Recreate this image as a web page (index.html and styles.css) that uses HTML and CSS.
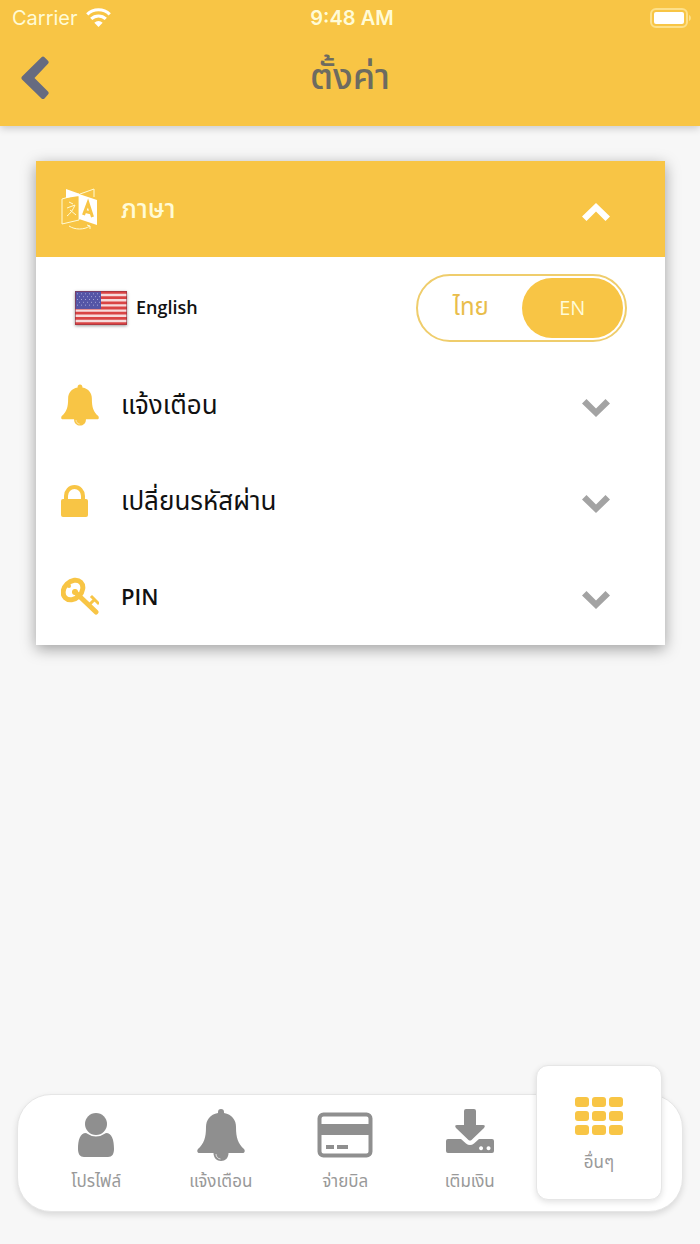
FILE: index.html
```html
<!DOCTYPE html>
<html lang="th">
<head>
<meta charset="utf-8">
<meta name="viewport" content="width=device-width, initial-scale=1">
<title>ตั้งค่า</title>
<link rel="stylesheet" href="styles.css">
</head>
<body>
<svg class="sprite" aria-hidden="true">
  <symbol id="bell" viewBox="0 0 48 52">
    <path d="M24 0c2 0 3 1.300 3 3v1c8 1.500 12 7 12 14 0 11 2 16.500 8 22 1.500 2 .6 4-1.500 4H2.500C.4 44-.5 42 1 40c6-5.500 8-11 8-22C9 11 13 5.500 21 4V3c0-1.700 1-3 3-3z"/>
    <path d="M16.500 43h15v1c0 5-3.300 8-7.500 8s-7.500-3-7.500-8z"/>
    <path class="shine" d="M19 45c0 2.800 2 4.800 4.500 5"/>
  </symbol>
  <symbol id="chevron" viewBox="0 0 28 18">
    <path d="M4.500 0 14 9.500 23.500 0 28 4.500 14 18 0 4.500z"/>
  </symbol>
</svg>
<div class="screen">
  <header class="top">
    <div class="status">
      <div class="carrier">
        <span>Carrier</span>
        <svg class="wifi" viewBox="0 0 24 18" aria-hidden="true">
          <path class="wave" d="M1.200 6a15.300 15.300 0 0 1 21.600 0M5 10.400a9.900 9.900 0 0 1 14 0"/>
          <path class="dot" d="M8 14a5.600 5.600 0 0 1 8 0L12 18z"/>
        </svg>
      </div>
      <time class="clock">9:48 AM</time>
      <svg class="battery" viewBox="0 0 42 20" aria-hidden="true">
        <rect class="shell" x="1" y="1" width="36" height="18" rx="5"/>
        <rect class="charge" x="4" y="4" width="30" height="12" rx="2"/>
        <path class="tip" d="M39 7c2.500 1 2.500 5 0 6z"/>
      </svg>
    </div>
    <div class="titlebar">
      <button class="back" type="button" aria-label="Back">
        <svg viewBox="0 0 28 44" aria-hidden="true"><path d="M20.500 1.200q1.500-1.200 3 0l3.500 3.500q1.400 1.500 0 3L13.500 22 27 35.500q1.400 1.500 0 3L23.500 42.500q-1.500 1.200-3 0L1 23.500q-1.200-1.500 0-3z"/></svg>
      </button>
      <h1 class="title">ตั้งค่า</h1>
    </div>
  </header>

  <main class="content">
    <section class="card">
      <button class="row row-open" type="button" aria-expanded="true">
        <svg class="icon translate" viewBox="0 0 38 42" aria-hidden="true">
          <path class="line" d="M19 6 33 1v8M1 11 18 6v26L1 36z"/>
          <path class="solid" d="M5 1 19 6 18 8 5 10zM18 6l18 6v25l-18-6z"/>
          <path class="line" d="M8 14l4 2M6 20l8-3c-2 5-5 9-8 11M9 22l6 5"/>
          <path class="letter" d="M22.500 27 27 15 31.500 29M24.500 23.500l6 1.500"/>
          <path class="line" d="M8 38c6 4 15 4 21 0m-3-1 3 1 0 3"/>
        </svg>
        <span class="label">ภาษา</span>
        <svg class="chevron up" aria-hidden="true"><use href="#chevron"/></svg>
      </button>
      <div class="language">
        <svg class="flag" viewBox="0 0 52 36" preserveAspectRatio="none" aria-hidden="true">
          <rect width="52" height="36" fill="#f6dcdc"/>
          <path d="M0 1.500h52M0 7h52M0 12.500h52M0 18h52M0 23.500h52M0 29h52M0 34.500h52" stroke="#d94444" stroke-width="3"/>
          <rect width="26" height="19" fill="#5455a6"/>
          <path d="M2 3h23M4 6h21M2 9h23M4 12h21M2 15h23" stroke="#a6a7d6" stroke-width="1" stroke-dasharray="1 3"/>
          <rect x=".5" y=".5" width="51" height="35" fill="none" stroke="#8f3040" stroke-opacity=".6"/>
        </svg>
        <span class="language-name">English</span>
        <fieldset class="switch" aria-label="ภาษา">
          <label class="option"><input type="radio" name="lang" value="th"><span>ไทย</span></label>
          <label class="option option-latin"><input type="radio" name="lang" value="en" checked><span>EN</span></label>
        </fieldset>
      </div>
      <button class="row" type="button" aria-expanded="false">
        <svg class="icon" viewBox="0 0 38 42" aria-hidden="true"><use href="#bell" width="38" height="42"/></svg>
        <span class="label">แจ้งเตือน</span>
        <svg class="chevron" aria-hidden="true"><use href="#chevron"/></svg>
      </button>
      <button class="row" type="button" aria-expanded="false">
        <svg class="icon" viewBox="0 0 38 42" aria-hidden="true">
          <rect x="0" y="19" width="27" height="18" rx="2"/>
          <path class="shackle" d="M5 21v-5a8.500 9 0 0 1 17 0v5"/>
        </svg>
        <span class="label">เปลี่ยนรหัสผ่าน</span>
        <svg class="chevron" aria-hidden="true"><use href="#chevron"/></svg>
      </button>
      <button class="row" type="button" aria-expanded="false">
        <svg class="icon" viewBox="0 0 38 42" aria-hidden="true">
          <g class="key">
            <ellipse cx="12" cy="14" rx="11" ry="8.500" transform="rotate(-45 12 14)"/>
            <path d="M14 16 35 36"/>
            <path class="teeth" d="M28 29l5-5M31 21l6 6"/>
          </g>
          <circle cx="14" cy="16" r="3"/>
          <circle cx="8" cy="10" r="2"/>
        </svg>
        <span class="label label-latin">PIN</span>
        <svg class="chevron" aria-hidden="true"><use href="#chevron"/></svg>
      </button>
    </section>
  </main>

  <nav class="tabs">
    <a class="tab" href="#profile">
      <svg viewBox="0 0 56 52" aria-hidden="true"><circle cx="28" cy="15" r="11"/><path d="M18 24q10 7 20 0c6 0 8 7 8 16 0 5-2 8-6 8H16c-4 0-6-3-6-8 0-9 2-16 8-16z"/></svg>
      <span>โปรไฟล์</span>
    </a>
    <a class="tab" href="#notifications">
      <svg viewBox="0 0 56 52" aria-hidden="true"><use href="#bell" x="4" width="48" height="52"/></svg>
      <span>แจ้งเตือน</span>
    </a>
    <a class="tab" href="#bills">
      <svg viewBox="0 0 56 52" aria-hidden="true"><rect class="outline" x="2.500" y="5.500" width="51" height="41" rx="4"/><path d="M2 15h52v11H2zM9 36h8v4H9zM20 36h11v4H20z"/></svg>
      <span>จ่ายบิล</span>
    </a>
    <a class="tab" href="#topup">
      <svg viewBox="0 0 56 52" aria-hidden="true"><path d="M24 0h8q2 0 2 2v14h7q3 0 1 3L29.500 31q-1.500 1-3 0L14 19q-2-3 1-3h7V2q0-2 2-2z"/><path fill-rule="evenodd" d="M6 30h13l5 4.500q4 3 8 0l5-4.500h13q2 0 2 2v10q0 2-2 2H6q-2 0-2-2V32q0-2 2-2zM39 37.200a2 2 0 1 0 .1 0zM46.500 37.200a2 2 0 1 0 .1 0z"/></svg>
      <span>เติมเงิน</span>
    </a>
    <a class="tab tab-active" href="#more" aria-current="page">
      <svg viewBox="0 0 56 52" aria-hidden="true">
        <rect x="4" y="3" width="14" height="10" rx="3"/><rect x="21" y="3" width="14" height="10" rx="3"/><rect x="38" y="3" width="14" height="10" rx="3"/>
        <rect x="4" y="17" width="14" height="10" rx="3"/><rect x="21" y="17" width="14" height="10" rx="3"/><rect x="38" y="17" width="14" height="10" rx="3"/>
        <rect x="4" y="31" width="14" height="10" rx="3"/><rect x="21" y="31" width="14" height="10" rx="3"/><rect x="38" y="31" width="14" height="10" rx="3"/>
      </svg>
      <span>อื่นๆ</span>
    </a>
  </nav>
</div>
</body>
</html>
```
FILE: styles.css
```css
:root {
  --gold: #f8c545;
  --cream: #fffbd6;
  --gray: #8f8f8f;
}

* { box-sizing: border-box; }

body {
  margin: 0;
  background: #f7f7f7;
  color: #111;
  font-family: "Open Sans", "Noto Sans Thai", "Noto Sans", sans-serif;
}

button {
  border: 0;
  padding: 0;
  background: none;
  color: inherit;
  font: inherit;
  cursor: pointer;
}

.sprite { position: absolute; width: 0; height: 0; }
.shine { fill: none; stroke: #fff; stroke-width: 1; opacity: .7; }

.screen {
  display: flex;
  flex-direction: column;
  min-height: 100vh;
}

.top {
  background: var(--gold);
  box-shadow: 0 2px 8px rgba(0, 0, 0, .2);
}

.status {
  display: grid;
  grid-template-columns: 1fr auto 1fr;
  align-items: center;
  height: 34px;
  padding: 1px 8px 0 12px;
  color: var(--cream);
  font-family: Inter, sans-serif;
  font-size: 20px;
}

.carrier { display: flex; align-items: center; gap: 8px; }
.wifi { width: 25px; height: 19px; }
.wave { fill: none; stroke: #fff; stroke-width: 3; }
.dot, .charge { fill: #fff; }
.clock { font-weight: 600; }
.battery { justify-self: end; width: 42px; height: 20px; }
.shell { fill: none; stroke: #fde08a; stroke-width: 2; }
.tip { fill: #fde08a; }

.titlebar {
  display: grid;
  grid-template-columns: 1fr auto 1fr;
  align-items: center;
  height: 92px;
  padding: 0 21px 4px;
}

.back { justify-self: start; width: 28px; height: 44px; }
.back svg { display: block; width: 28px; height: 44px; fill: #666b80; }
.title { margin: 0 0 4px; color: #6d6b60; font-size: 36px; font-weight: 500; line-height: 48px; }

.content { flex: 1; padding: 35px 35px 48px 36px; }

.card {
  background: #fff;
  box-shadow: 0 4px 14px rgba(0, 0, 0, .36);
}

.row {
  display: flex;
  align-items: center;
  width: 100%;
  height: 96px;
  padding: 0 55px 0 25px;
  text-align: left;
}

.row-open { background: var(--gold); color: var(--cream); }
.row-open .label { font-weight: 500; }
.icon { width: 38px; height: 42px; fill: var(--gold); }
.label { flex: 1; margin: 0 0 2px 22px; font-size: 26px; line-height: 36px; }
.label-latin { font-size: 22px; font-weight: 600; }
.chevron { width: 28px; height: 18px; margin-top: 6px; fill: #a3a3a3; }
.up { transform: rotate(180deg); fill: #fff; }
.line { fill: none; stroke: var(--cream); stroke-width: 1; }
.solid { fill: #fff; }
.letter { fill: none; stroke: var(--gold); stroke-width: 3; }
.shackle { fill: none; stroke: var(--gold); stroke-width: 4; }
.key { fill: none; stroke: var(--gold); stroke-width: 5; stroke-linecap: round; }
.key .teeth { stroke-width: 3; stroke-linecap: square; }

.language {
  display: flex;
  align-items: center;
  height: 100px;
  padding: 2px 38px 0 39px;
}

.flag { width: 52px; height: 34px; box-shadow: 0 1px 3px rgba(0, 0, 0, .4); }
.language-name { flex: 1; margin: 0 0 2px 9px; font-size: 18px; font-weight: 600; }

.switch {
  display: flex;
  width: 211px;
  height: 68px;
  margin: 0;
  padding: 2px;
  border: 2px solid #efcd6c;
  border-radius: 34px;
}

.option { position: relative; flex: 1; color: #e9bd4b; font-size: 24px; cursor: pointer; }
.option-latin { font-size: 20px; }
.option input { position: absolute; opacity: 0; }
.option span {
  display: flex;
  align-items: center;
  justify-content: center;
  height: 100%;
  padding-bottom: 2px;
  border-radius: 30px;
}
.option input:checked + span { background: var(--gold); color: var(--cream); }

.tabs {
  display: grid;
  grid-template-columns: repeat(4, 1fr) 130px;
  height: 118px;
  margin: 0 17px 32px;
  padding: 0 20px 0 16px;
  border: 1px solid #e6e6e6;
  border-radius: 34px;
  background: #fff;
  box-shadow: 0 3px 6px rgba(0, 0, 0, .12);
}

.tab {
  display: flex;
  flex-direction: column;
  align-items: center;
  gap: 6px;
  padding-top: 14px;
  color: #999;
  font-size: 17px;
  line-height: 28px;
  text-decoration: none;
}

.tab svg { width: 56px; height: 52px; fill: var(--gray); }
.tab .outline { fill: none; stroke: var(--gray); stroke-width: 4; }

.tab-active {
  height: 135px;
  margin: -30px 0 0 4px;
  padding-top: 28px;
  gap: 2px;
  border: 1px solid #e6e6e6;
  border-radius: 12px;
  background: #fff;
  box-shadow: 0 2px 6px rgba(0, 0, 0, .12);
}

.tab-active svg { fill: var(--gold); }
```
